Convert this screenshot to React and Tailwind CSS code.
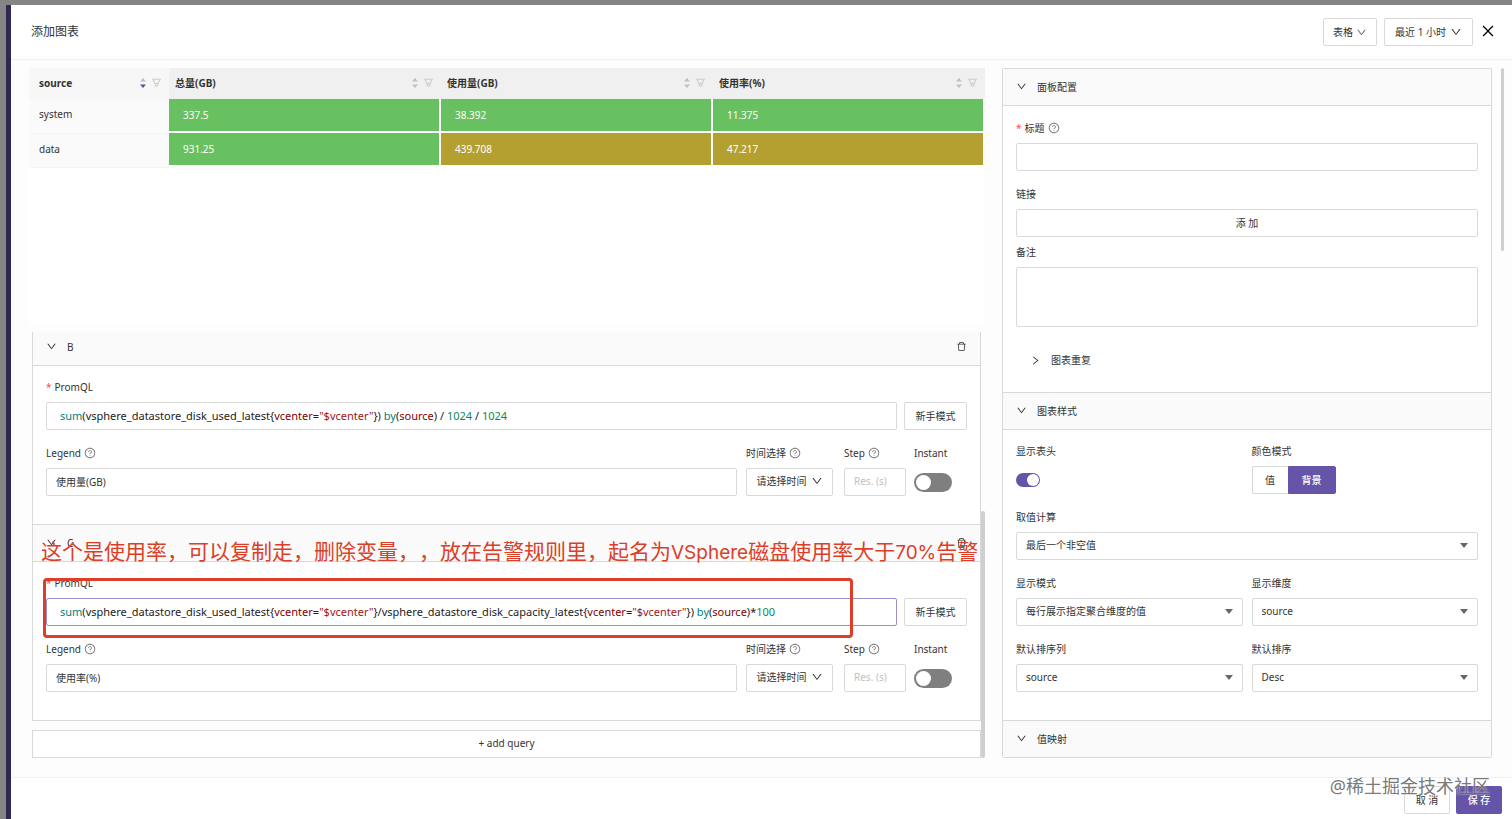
import { useState } from "react";
import {
  AiOutlineClose,
  AiOutlineDelete,
  AiOutlineDown,
  AiOutlineFilter,
  AiOutlineQuestionCircle,
  AiOutlineRight,
} from "react-icons/ai";

const columns = ["总量(GB)", "使用量(GB)", "使用率(%)"];

const rows = [
  { source: "system", values: [["337.5", "green"], ["38.392", "green"], ["11.375", "green"]] },
  { source: "data", values: [["931.25", "green"], ["439.708", "gold"], ["47.217", "gold"]] },
];

const cellColors = { green: "bg-[#68c160]", gold: "bg-[#b4a031]" };

const tokenColors = {
  fn: "text-[#008080]",
  num: "text-[#09885a]",
  label: "text-[#800000]",
  str: "text-[#a31515]",
  text: "text-[#222222]",
};

const queryB = [
  ["fn", "sum"],
  ["text", "(vsphere_datastore_disk_used_latest{"],
  ["label", "vcenter"],
  ["text", "="],
  ["str", '"$vcenter"'],
  ["text", "}) "],
  ["fn", "by"],
  ["text", "("],
  ["label", "source"],
  ["text", ") / "],
  ["num", "1024"],
  ["text", " / "],
  ["num", "1024"],
];

const queryC = [
  ["fn", "sum"],
  ["text", "(vsphere_datastore_disk_used_latest{"],
  ["label", "vcenter"],
  ["text", "="],
  ["str", '"$vcenter"'],
  ["text", "}/vsphere_datastore_disk_capacity_latest{"],
  ["label", "vcenter"],
  ["text", "="],
  ["str", '"$vcenter"'],
  ["text", "}) "],
  ["fn", "by"],
  ["text", "("],
  ["label", "source"],
  ["text", ")*"],
  ["num", "100"],
];

function Sorter({ active }) {
  return (
    <svg viewBox="0 0 8 12" className="h-3 w-2">
      <path d="M4 1 7 4.5H1z" fill="#bfbfbf" />
      <path d="M4 11 7 7.5H1z" fill={active ? "#5b4cb0" : "#bfbfbf"} />
    </svg>
  );
}

function HeadCell({ title, active }) {
  return (
    <div className="flex items-center">
      <span className="flex-1">{title}</span>
      <button type="button" aria-label={"排序 " + title} className="mr-1">
        <Sorter active={active} />
      </button>
      <button type="button" aria-label={"筛选 " + title} className="text-[#bfbfbf]">
        <AiOutlineFilter className="h-[11px] w-[11px]" />
      </button>
    </div>
  );
}

function PreviewTable() {
  return (
    <table className="w-full table-fixed border-collapse text-left">
      <colgroup>
        <col className="w-[140px]" />
        <col />
        <col />
        <col />
      </colgroup>
      <thead>
        <tr className="h-[31px] bg-[#f0f0f0]">
          <th className="bg-[#f7f7f7] pr-[7px] pb-[2px] pl-[10px]">
            <HeadCell title="source" active />
          </th>
          {columns.map((title) => (
            <th key={title} className="pr-[7px] pb-[2px] pl-[6px]">
              <HeadCell title={title} />
            </th>
          ))}
        </tr>
      </thead>
      <tbody>
        {rows.map((row) => (
          <tr key={row.source} className="h-[34px]">
            <td className="border-b border-[#f5f5f5] bg-[#fafafa] pb-[3px] pl-[10px]">{row.source}</td>
            {row.values.map(([value, color]) => (
              <td key={value} className="pr-[2px] pb-[2px]">
                <div className={"flex h-8 items-center pb-px pl-[14px] text-white " + cellColors[color]}>{value}</div>
              </td>
            ))}
          </tr>
        ))}
      </tbody>
    </table>
  );
}

function Label({ children, htmlFor, required, help }) {
  return (
    <label htmlFor={htmlFor} className="mb-1 flex h-[22px] items-center">
      {required ? <span className="mr-[3px] text-[#ff4d4f]">*</span> : null}
      {children}
      {help ? <AiOutlineQuestionCircle className="ml-[3px] h-3 w-3 text-[#7a7a7a]" /> : null}
    </label>
  );
}

function SectionHeader({ title, onDelete }) {
  return (
    <div className="flex h-[37px] items-center border-b border-[#d9d9d9] bg-[#fafafa] px-[13px] pb-px">
      <button type="button" className="flex items-center gap-[10px]">
        <AiOutlineDown className="h-[11px] w-[11px]" />
        {title}
      </button>
      {onDelete ? (
        <button type="button" aria-label={"删除 " + title} className="ml-auto">
          <AiOutlineDelete className="h-[11px] w-[11px]" />
        </button>
      ) : null}
    </div>
  );
}

function PromInput({ id, tokens, focused }) {
  return (
    <div
      id={id}
      role="textbox"
      aria-label="PromQL"
      contentEditable
      suppressContentEditableWarning
      className={
        "h-7 min-w-0 flex-1 overflow-hidden rounded-xs border bg-white pl-[13px] text-[11px] leading-[26px] whitespace-pre outline-none " +
        (focused ? "border-[#9a8fc8]" : "border-[#d9d9d9]")
      }
    >
      {tokens.map(([kind, text], i) => (
        <span key={i} className={tokenColors[kind]}>{text}</span>
      ))}
    </div>
  );
}

function QueryBody({ id, tokens, legend, focused }) {
  return (
    <div className="px-[13px] pt-[10px] pb-7">
      <Label required>PromQL</Label>
      <div className="mb-3 flex gap-[7px]">
        <PromInput id={id + "-promql"} tokens={tokens} focused={focused} />
        <button type="button" className="h-7 w-[63px] rounded-xs border border-[#d9d9d9] bg-white">新手模式</button>
      </div>
      <div className="flex">
        <div className="mr-[9px] min-w-0 flex-1">
          <Label htmlFor={id + "-legend"} help>Legend</Label>
          <input id={id + "-legend"} defaultValue={legend} className="h-7 w-full rounded-xs border border-[#d9d9d9] px-[9px] pb-[2px] outline-none" />
        </div>
        <div className="mr-[11px] w-[87px]">
          <Label htmlFor={id + "-time"} help>时间选择</Label>
          <button id={id + "-time"} type="button" className="flex h-7 w-full items-center justify-center gap-1 rounded-xs border border-[#d9d9d9] pb-[2px]">
            请选择时间
            <AiOutlineDown className="h-3 w-3" />
          </button>
        </div>
        <div className="mr-2 w-[62px]">
          <Label htmlFor={id + "-step"} help>Step</Label>
          <input id={id + "-step"} placeholder="Res. (s)" className="h-7 w-full rounded-xs border border-[#d9d9d9] px-[9px] pb-[2px] outline-none placeholder:text-[#bfbfbf]" />
        </div>
        <div className="w-[53px]">
          <Label htmlFor={id + "-instant"}>Instant</Label>
          <div className="flex h-7 items-center">
            <input
              id={id + "-instant"}
              type="checkbox"
              role="switch"
              className="h-[19px] w-[38px] appearance-none rounded-full bg-[#7f7f7f] p-[2px] before:block before:h-[15px] before:w-[15px] before:rounded-full before:bg-white checked:bg-[#6554a8] checked:before:ml-auto"
            />
          </div>
        </div>
      </div>
    </div>
  );
}

function SelectField({ id, label, value }) {
  return (
    <div className="min-w-0">
      <Label htmlFor={id}>{label}</Label>
      <div className="relative">
        <select id={id} className="h-7 w-full appearance-none rounded-xs border border-[#d9d9d9] bg-white px-[9px] pb-[2px] outline-none">
          <option>{value}</option>
        </select>
        <svg viewBox="0 0 8 5" className="pointer-events-none absolute top-[11px] right-[10px] h-[5px] w-2">
          <path d="M0 0h8L4 5z" fill="#666" />
        </svg>
      </div>
    </div>
  );
}

function ColorMode() {
  const [mode, setMode] = useState("background");
  return (
    <fieldset>
      <legend className="mb-1 flex h-[22px] items-center">颜色模式</legend>
      <div className="flex h-7">
        <label className="relative flex w-9 items-center justify-center rounded-l-xs border border-r-0 border-[#d9d9d9] has-checked:bg-[#6554a8] has-checked:text-white">
          <input type="radio" name="mode" className="sr-only" checked={mode === "value"} onChange={() => setMode("value")} />
          值
        </label>
        <label className="relative flex w-12 items-center justify-center rounded-r-xs border border-[#6554a8] has-checked:bg-[#6554a8] has-checked:font-medium has-checked:text-white">
          <input type="radio" name="mode" className="sr-only" checked={mode === "background"} onChange={() => setMode("background")} />
          背景
        </label>
      </div>
    </fieldset>
  );
}

function OptionsPanel() {
  return (
    <div className="min-w-0 flex-1 overflow-hidden rounded-xs border border-b-0 border-[#d9d9d9] bg-white">
      <SectionHeader title="面板配置" />
      <div className="px-[13px] pt-[11px] pb-[21px]">
        <Label htmlFor="title" required help>标题</Label>
        <input id="title" className="mb-3 block h-7 w-full rounded-xs border border-[#d9d9d9] px-[9px] outline-none" />
        <Label htmlFor="link">链接</Label>
        <button id="link" type="button" className="mb-1 block h-7 w-full rounded-xs border border-[#d9d9d9]">添 加</button>
        <Label htmlFor="note">备注</Label>
        <textarea id="note" className="block h-[60px] w-full resize-none rounded-xs border border-[#d9d9d9] p-2 outline-none" />
        <button type="button" className="mt-[22px] ml-[14px] flex h-[22px] items-center gap-[10px]">
          <AiOutlineRight className="h-[11px] w-[11px]" />
          图表重复
        </button>
      </div>
      <div className="border-t border-[#d9d9d9]">
        <SectionHeader title="图表样式" />
        <div className="grid grid-cols-2 gap-x-[9px] gap-y-3 px-[13px] pt-[10px] pb-7">
          <div>
            <Label htmlFor="show-header">显示表头</Label>
            <div className="flex h-7 items-center">
              <input
                id="show-header"
                type="checkbox"
                role="switch"
                defaultChecked
                className="h-[14px] w-6 appearance-none rounded-full bg-[#7f7f7f] p-px before:block before:h-3 before:w-3 before:rounded-full before:bg-white checked:bg-[#6554a8] checked:before:ml-auto"
              />
            </div>
          </div>
          <ColorMode />
          <div className="col-span-2">
            <SelectField id="calc" label="取值计算" value="最后一个非空值" />
          </div>
          <SelectField id="display-mode" label="显示模式" value="每行展示指定聚合维度的值" />
          <SelectField id="dimension" label="显示维度" value="source" />
          <SelectField id="sort-column" label="默认排序列" value="source" />
          <SelectField id="sort-order" label="默认排序" value="Desc" />
        </div>
      </div>
      <div className="border-t border-[#d9d9d9]">
        <SectionHeader title="值映射" />
      </div>
    </div>
  );
}

export default function App() {
  return (
    <div className="flex h-screen overflow-hidden bg-[#858585] pt-[5px] font-['Noto_Sans','Noto_Sans_CJK_SC',sans-serif] text-[10px] leading-4 text-[#333333]">
      <div className="w-[6px] shrink-0" />
      <div className="w-[5px] shrink-0 bg-[#2f2852]" />
      <main className="flex min-w-0 flex-1 flex-col bg-white">
        <header className="flex h-[55px] shrink-0 items-center border-b border-[#f0f0f0] pr-4 pl-5">
          <h1 className="flex-1 text-xs">添加图表</h1>
          <button type="button" className="mr-[7px] flex h-7 w-[54px] items-center justify-center gap-[3px] rounded-xs border border-[#d9d9d9]">
            表格
            <AiOutlineDown className="h-[11px] w-[11px] text-[#666666]" />
          </button>
          <button type="button" className="mr-[7px] flex h-7 w-[89px] items-center justify-center gap-1 rounded-xs border border-[#d9d9d9]">
            最近 1 小时
            <AiOutlineDown className="h-3 w-3" />
          </button>
          <button type="button" aria-label="关闭" className="pb-[3px] text-black">
            <AiOutlineClose className="h-4 w-4" />
          </button>
        </header>

        <div className="grid min-h-0 flex-1 grid-cols-[956fr_502fr] gap-[17px] bg-[#fdfdfd] pt-2 pr-2 pb-[19px] pl-[18px]">
          <div className="flex min-h-0 min-w-0 flex-col">
            <div className="mb-2 h-64 shrink-0 bg-white">
              <PreviewTable />
            </div>
            <div className="flex min-h-0 flex-1 pl-[3px]">
              <div className="flex min-w-0 flex-1 flex-col justify-end overflow-hidden">
                <section className="border-x border-[#d9d9d9] bg-white">
                  <SectionHeader title="B" onDelete />
                  <QueryBody id="b" tokens={queryB} legend="使用量(GB)" />
                </section>
                <section className="relative border border-[#d9d9d9] bg-white">
                  <SectionHeader title="C" onDelete />
                  <QueryBody id="c" tokens={queryC} legend="使用率(%)" focused />
                  <p className="pointer-events-none absolute top-[10px] left-2 text-[21px] leading-8 whitespace-nowrap text-[#dc3e27] [text-spacing-trim:space-all]">
                    这个是使用率，可以复制走，删除变量，，放在告警规则里，起名为
                    <span className="font-[Inter,sans-serif] text-[19px]">VSphere</span>
                    磁盘使用率大于
                    <span className="font-[Inter,sans-serif] text-[19px]">70%</span>
                    告警
                  </p>
                  <div className="pointer-events-none absolute top-[53px] left-[10px] h-[60px] w-[810px] rounded-[4px] border-[3px] border-[#dc3e27]" />
                </section>
                <button type="button" className="mt-[9px] h-7 shrink-0 border border-[#d9d9d9] bg-white pb-[2px]">+ add query</button>
              </div>
              <div className="flex w-1 flex-col justify-end">
                <div className="h-[247px] rounded-full bg-[#cfcfcf]" />
              </div>
            </div>
          </div>

          <div className="flex min-h-0 min-w-0">
            <OptionsPanel />
            <div className="ml-[9px] h-[183px] w-[3px] rounded-full bg-[#cfcfcf]" />
          </div>
        </div>

        <footer className="relative flex h-[42px] shrink-0 items-start justify-end gap-[6px] border-t border-[#f0f0f0] pt-2 pr-[10px]">
          <button type="button" className="h-7 w-[46px] rounded-xs border border-[#d9d9d9] bg-white">取 消</button>
          <button type="button" className="h-7 w-[46px] rounded-xs bg-[#6554a8] font-medium text-white">保 存</button>
          <span className="pointer-events-none absolute -top-[6px] right-[22px] text-lg leading-7 text-[#555555]/80 [text-shadow:0_0_2px_#ffffff]">
            @稀土掘金技术社区
          </span>
        </footer>
      </main>
    </div>
  );
}
